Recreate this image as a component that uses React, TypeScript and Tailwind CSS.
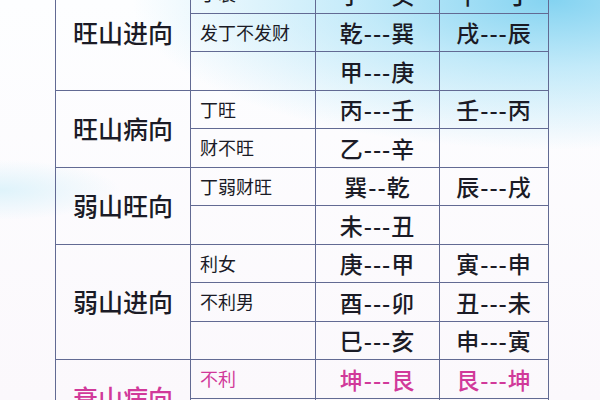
import React from "react";

type Row = [string, string, string];
type Group = { label: string; rows: Row[]; pink?: boolean };

const groups: Group[] = [
  {
    label: "旺山进向",
    rows: [
      ["丁衰", "子---癸", "午---丁"],
      ["发丁不发财", "乾---巽", "戌---辰"],
      ["", "甲---庚", ""],
    ],
  },
  {
    label: "旺山病向",
    rows: [
      ["丁旺", "丙---壬", "壬---丙"],
      ["财不旺", "乙---辛", ""],
    ],
  },
  {
    label: "弱山旺向",
    rows: [
      ["丁弱财旺", "巽--乾", "辰---戌"],
      ["", "未---丑", ""],
    ],
  },
  {
    label: "弱山进向",
    rows: [
      ["利女", "庚---甲", "寅---申"],
      ["不利男", "酉---卯", "丑---未"],
      ["", "巳---亥", "申---寅"],
    ],
  },
  {
    label: "衰山病向",
    pink: true,
    rows: [
      ["不利", "坤---艮", "艮---坤"],
      ["", "", ""],
    ],
  },
];

const span: Record<number, string> = {
  1: "row-span-1",
  2: "row-span-2",
  3: "row-span-3",
};

const cell = "border-r border-b border-[#626a93]";

export default function App() {
  return (
    <div className="w-[600px] h-[400px] overflow-hidden font-['Noto_Sans_CJK_SC','Noto_Sans',sans-serif] text-[#1b1b26] bg-[radial-gradient(ellipse_420px_150px_at_92%_0%,#84d3f1_0%,rgba(170,226,247,0.7)_45%,rgba(255,255,255,0)_100%),radial-gradient(ellipse_120px_30px_at_0%_190px,rgba(215,241,250,0.8),rgba(255,255,255,0)),linear-gradient(#fdfeff,#fbf8fc)]">
      <div className="ml-[55px] mt-[-26px] grid grid-cols-[135px_125px_124px_109px] auto-rows-[38.5px] border-l border-t border-[#626a93]">
        {groups.map((g) => (
          <React.Fragment key={g.label}>
            <div
              className={`${cell} ${span[g.rows.length]} col-start-1 flex items-center justify-center text-[25px] font-medium ${g.pink ? "text-[#d1399a]" : ""}`}
            >
              {g.label}
            </div>
            {g.rows.map((r, i) => (
              <React.Fragment key={i}>
                <div
                  className={`${cell} col-start-2 flex items-center pl-[9px] text-[18px] ${g.pink ? "text-[#d1399a]" : ""}`}
                >
                  {r[0]}
                </div>
                <div
                  className={`${cell} col-start-3 flex items-center justify-center text-[23px] font-medium tracking-[1px] ${g.pink ? "text-[#d1399a]" : ""}`}
                >
                  {r[1]}
                </div>
                <div
                  className={`${cell} col-start-4 flex items-center justify-center text-[23px] font-medium tracking-[1px] ${g.pink ? "text-[#d1399a]" : ""}`}
                >
                  {r[2]}
                </div>
              </React.Fragment>
            ))}
          </React.Fragment>
        ))}
      </div>
    </div>
  );
}
